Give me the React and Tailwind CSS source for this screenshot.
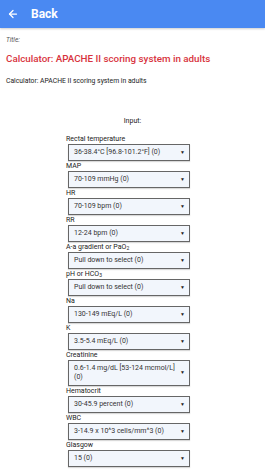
import { ArrowLeft } from 'lucide-react';

const fields = [
    { label: 'Rectal temperature', value: '36-38.4°C [96.8-101.2°F] (0)' },
    { label: 'MAP', value: '70-109 mmHg (0)' },
    { label: 'HR', value: '70-109 bpm (0)' },
    { label: 'RR', value: '12-24 bpm (0)' },
    { label: <>A-a gradient or PaO<sub className="text-[5px]">2</sub></>, value: 'Pull down to select (0)' },
    { label: <>pH or HCO<sub className="text-[5px]">3</sub></>, value: 'Pull down to select (0)' },
    { label: 'Na', value: '130-149 mEq/L (0)' },
    { label: 'K', value: '3.5-5.4 mEq/L (0)' },
    { label: 'Creatinine', value: '0.6-1.4 mg/dL [53-124 mcmol/L] (0)' },
    { label: 'Hematocrit', value: '30-45.9 percent (0)' },
    { label: 'WBC', value: '3-14.9 x 10^3 cells/mm^3 (0)' },
    { label: 'Glasgow', value: '15 (0)' },
];

const Field = ({ label, value }) => (
    <div className="flex flex-col">
        <div className="h-[10px] text-[7px] leading-[10px] text-[#222] pl-[1px] whitespace-nowrap">{label}</div>
        <div className="ml-[3px] w-[122px] min-h-[17px] border border-[#666] bg-[#f2f6fc] shadow-[0_1px_1px_rgba(0,0,0,0.15)] flex items-center pl-[5px] pr-[4px] py-[3px]">
            <span className="flex-1 text-[7px] leading-[9px] text-[#333]">{value}</span>
            <span className="text-[5px] text-[#222] ml-1">▼</span>
        </div>
    </div>
);

export default function App() {
    return (
        <div className="w-[265px] h-[471px] overflow-hidden bg-white font-['Roboto',sans-serif]">
            <div className="h-[28px] bg-[#4a89f2] flex items-center text-white shadow-[0_1px_2px_rgba(0,0,0,0.2)]">
                <ArrowLeft size={12} strokeWidth={2.5} className="ml-[7px]" />
                <span className="ml-[12px] text-[12px] font-bold">Back</span>
            </div>
            <div className="px-[6px]">
                <div className="mt-[8px] text-[6.5px] italic text-[#555]">Title:</div>
                <div className="mt-[6px] text-[9.8px] font-medium text-[#d8333d]">Calculator: APACHE II scoring system in adults</div>
                <div className="mt-[10px] text-[6.8px] text-[#222]">Calculator: APACHE II scoring system in adults</div>
            </div>
            <div className="mt-[29px] text-center text-[7px] text-[#222]">Input:</div>
            <div className="mt-[8px] ml-[65px] flex flex-col">
                {fields.map((f, i) => (
                    <Field key={i} label={f.label} value={f.value} />
                ))}
            </div>
        </div>
    );
}
